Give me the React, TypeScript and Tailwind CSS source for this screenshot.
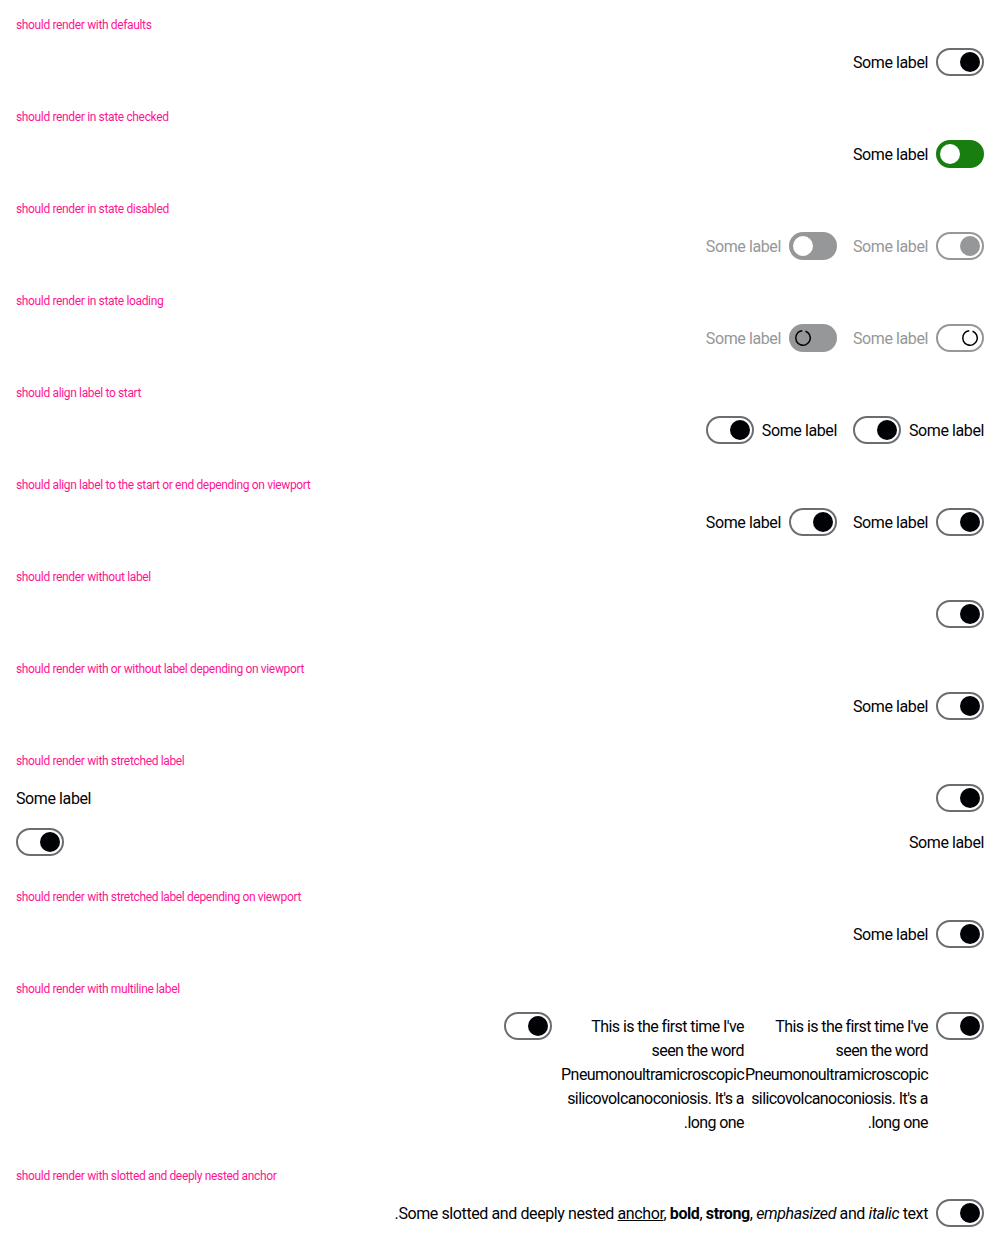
import React from "react";

type SwProps = { checked?: boolean; disabled?: boolean; loading?: boolean };

function Spinner() {
  return (
    <svg width="20" height="20" viewBox="0 0 20 20" className="block">
      <circle
        cx="10"
        cy="10"
        r="7.25"
        fill="none"
        stroke="#010205"
        strokeWidth="1.5"
        strokeDasharray="42 3.5"
        transform="rotate(-70 10 10)"
      />
    </svg>
  );
}

function Track({ checked, disabled, loading }: SwProps) {
  const muted = disabled || loading;
  let track = "";
  if (checked) track = muted ? "bg-[#969799] border-[#969799]" : "bg-[#197e10] border-[#197e10]";
  else track = muted ? "bg-white border-[#969799]" : "bg-white border-[#6b6d70]";
  const pos = checked ? "justify-start" : "justify-end";
  let thumb = "bg-[#010205]";
  if (checked) thumb = "bg-white";
  else if (disabled) thumb = "bg-[#969799]";
  return (
    <span dir="ltr" className={`flex shrink-0 w-12 h-7 rounded-full border-2 items-center px-[2px] ${track} ${pos}`}>
      {loading ? <Spinner /> : <span className={`block w-5 h-5 rounded-full ${thumb}`} />}
    </span>
  );
}

function Label({ children, muted, className = "" }: { children: React.ReactNode; muted?: boolean; className?: string }) {
  return (
    <span className={`block pt-[3px] text-base leading-6 ${muted ? "text-[#969799]" : "text-[#010205]"} ${className}`}>
      {children}
    </span>
  );
}

function Item({ labelStart, muted, sw, label = "Some label", full }: { labelStart?: boolean; muted?: boolean; sw: SwProps; label?: React.ReactNode; full?: boolean }) {
  const l = <Label muted={muted}>{label}</Label>;
  const t = <Track {...sw} />;
  return (
    <div className={`flex items-start gap-2 ${full ? "w-full justify-between" : ""}`}>
      {labelStart ? l : t}
      {labelStart ? t : l}
    </div>
  );
}

function Title({ children }: { children: React.ReactNode }) {
  return <p className="pt-[17px] pb-[15px] text-xs leading-4 text-[#ff1493] tracking-[-0.35px]">{children}</p>;
}

function Block({ title, children }: { title: string; children: React.ReactNode }) {
  return (
    <div className="px-4 pb-4">
      <Title>{title}</Title>
      <div dir="rtl" className="flex flex-wrap gap-4">
        {children}
      </div>
    </div>
  );
}

const longText = (
  <>
    This is the first time I've seen the word Pneumonoultramicroscopic<wbr />silicovolcanoconiosis. It's a long one.
  </>
);

export default function App() {
  return (
    <div className="w-full bg-white font-['Roboto',sans-serif] tracking-[-0.4px] text-[#010205]">
      <Block title="should render with defaults">
        <Item sw={{}} />
      </Block>
      <Block title="should render in state checked">
        <Item sw={{ checked: true }} />
      </Block>
      <Block title="should render in state disabled">
        <Item muted sw={{ disabled: true }} />
        <Item muted sw={{ disabled: true, checked: true }} />
      </Block>
      <Block title="should render in state loading">
        <Item muted sw={{ loading: true }} />
        <Item muted sw={{ loading: true, checked: true }} />
      </Block>
      <Block title="should align label to start">
        <Item labelStart sw={{}} />
        <Item labelStart sw={{}} />
      </Block>
      <Block title="should align label to the start or end depending on viewport">
        <Item sw={{}} />
        <Item sw={{}} />
      </Block>
      <Block title="should render without label">
        <Track />
      </Block>
      <Block title="should render with or without label depending on viewport">
        <Item sw={{}} />
      </Block>
      <Block title="should render with stretched label">
        <div className="flex flex-col gap-4 w-full">
          <Item full sw={{}} />
          <Item full labelStart sw={{}} />
        </div>
      </Block>
      <Block title="should render with stretched label depending on viewport">
        <Item sw={{}} />
      </Block>
      <div className="px-4 pb-4">
        <Title>should render with multiline label</Title>
        <div dir="rtl" className="flex">
          <div className="flex items-start gap-2 w-[240px]">
            <Track />
            <Label className="w-[184px] tracking-[-0.58px]">{longText}</Label>
          </div>
          <div className="flex items-start gap-2 w-[240px]">
            <Label className="w-[184px] tracking-[-0.58px]">{longText}</Label>
            <Track />
          </div>
        </div>
      </div>
      <Block title="should render with slotted and deeply nested anchor">
        <Item
          sw={{}}
          label={
            <>
              Some slotted and deeply nested <a className="underline">anchor</a>, <b className="font-bold">bold</b>,{" "}
              <strong className="font-bold">strong</strong>, <em className="italic">emphasized</em> and{" "}
              <i className="italic">italic</i> text.
            </>
          }
        />
      </Block>
    </div>
  );
}
